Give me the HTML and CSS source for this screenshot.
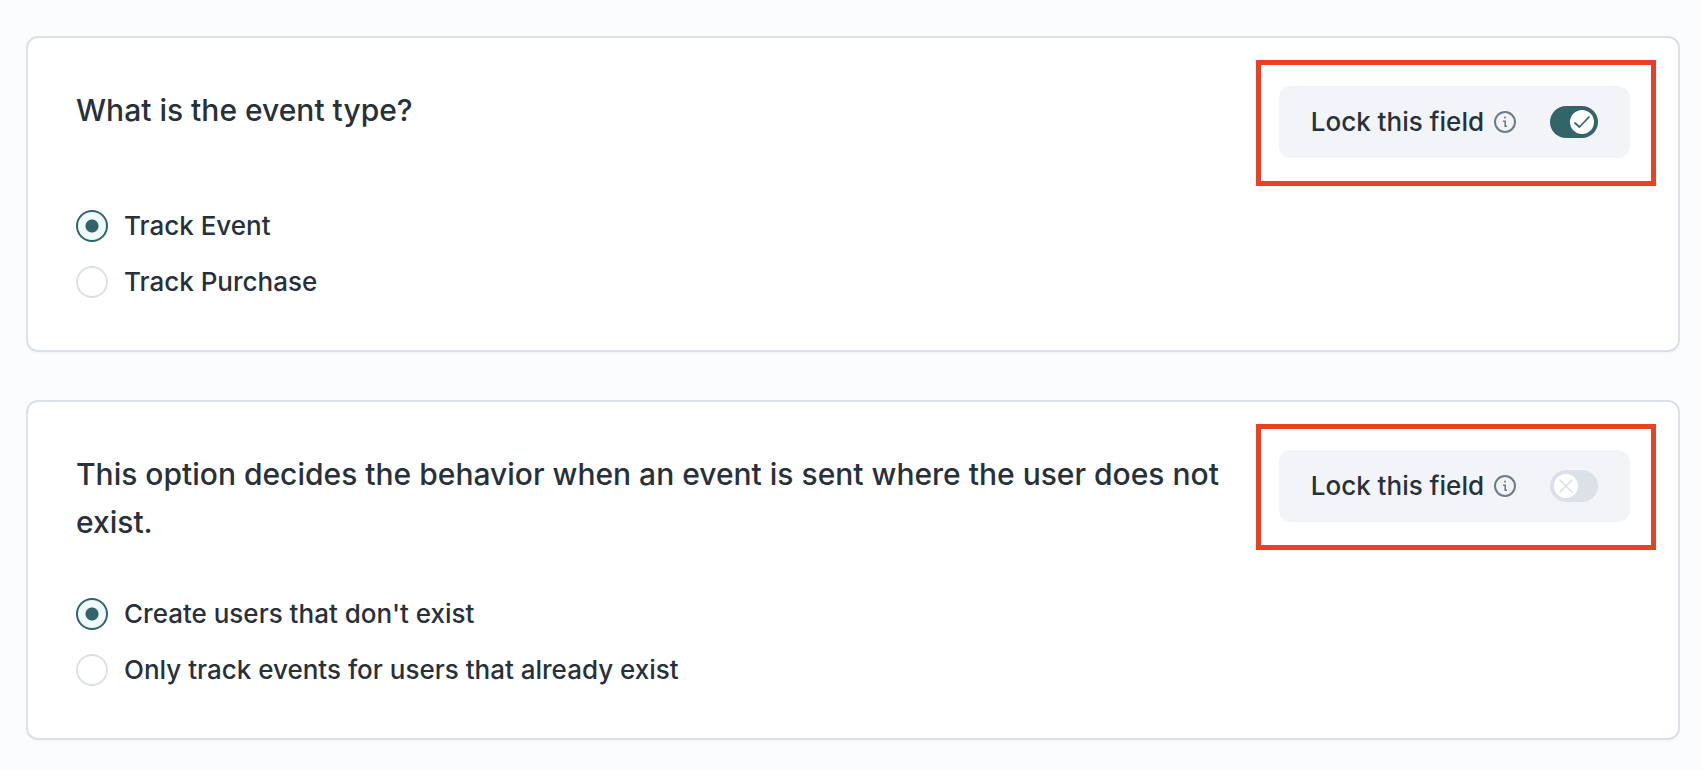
FILE: index.html
```html
<!DOCTYPE html>
<html lang="en">
<head>
    <meta charset="UTF-8">
    <meta name="viewport" content="width=device-width, initial-scale=1.0">
    <title>Event Settings</title>
    <link rel="stylesheet" href="styles.css">
</head>
<body>
    <form class="settings">
        <section class="card">
            <div class="card-header">
                <h2 id="event-type-title">What is the event type?</h2>
                <div class="lock">
                    <label for="lock-event-type">Lock this field</label>
                    <svg class="info" viewBox="0 0 22 22" aria-hidden="true">
                        <circle cx="11" cy="11" r="10"/>
                        <path class="info-stem" d="M9 10.2h2.2v5h1.8"/>
                        <circle class="info-dot" cx="11" cy="6.6" r="1"/>
                    </svg>
                    <span class="toggle">
                        <input type="checkbox" id="lock-event-type" checked>
                        <span class="knob">
                            <svg class="icon-on" viewBox="0 0 24 24"><path d="M5 13l4.5 4L19 7"/></svg>
                            <svg class="icon-off" viewBox="0 0 24 24"><path d="M6 6l12 12M18 6L6 18"/></svg>
                        </span>
                    </span>
                </div>
            </div>
            <div class="options" role="radiogroup" aria-labelledby="event-type-title">
                <label class="option">
                    <input type="radio" name="event-type" value="event" checked>
                    Track Event
                </label>
                <label class="option">
                    <input type="radio" name="event-type" value="purchase">
                    Track Purchase
                </label>
            </div>
        </section>

        <section class="card">
            <div class="card-header">
                <h2 id="user-behavior-title">This option decides the behavior when an event is sent where the user does not exist.</h2>
                <div class="lock">
                    <label for="lock-user-behavior">Lock this field</label>
                    <svg class="info" viewBox="0 0 22 22" aria-hidden="true">
                        <circle cx="11" cy="11" r="10"/>
                        <path class="info-stem" d="M9 10.2h2.2v5h1.8"/>
                        <circle class="info-dot" cx="11" cy="6.6" r="1"/>
                    </svg>
                    <span class="toggle">
                        <input type="checkbox" id="lock-user-behavior">
                        <span class="knob">
                            <svg class="icon-on" viewBox="0 0 24 24"><path d="M5 13l4.5 4L19 7"/></svg>
                            <svg class="icon-off" viewBox="0 0 24 24"><path d="M6 6l12 12M18 6L6 18"/></svg>
                        </span>
                    </span>
                </div>
            </div>
            <div class="options" role="radiogroup" aria-labelledby="user-behavior-title">
                <label class="option">
                    <input type="radio" name="user-behavior" value="create" checked>
                    Create users that don't exist
                </label>
                <label class="option">
                    <input type="radio" name="user-behavior" value="existing">
                    Only track events for users that already exist
                </label>
            </div>
        </section>
    </form>
</body>
</html>
```
FILE: styles.css
```css
* {
    box-sizing: border-box;
}
body {
    margin: 0;
    font-family: Inter, sans-serif;
    font-size: 26px;
    font-weight: 500;
    line-height: 40px;
    color: #28303a;
    background-color: #fbfcfe;
}
.settings {
    display: flex;
    flex-direction: column;
    gap: 48px;
    padding: 36px 22px 28px 26px;
}
.card {
    padding: 48px;
    background-color: #fff;
    border: 2px solid #dce1e8;
    border-radius: 12px;
    box-shadow: 0 1px 2px rgba(37, 44, 53, 0.04);
}
.card-header {
    display: flex;
    justify-content: space-between;
    align-items: flex-start;
    gap: 48px;
    margin-bottom: 48px;
}
h2 {
    margin: 0;
    font-size: 30px;
    font-weight: 500;
    line-height: 48px;
}
.lock {
    position: relative;
    display: flex;
    flex-shrink: 0;
    align-items: center;
    padding: 16px 32px;
    background-color: #f2f4f8;
    border-radius: 12px;
}
/* highlight frame */
.lock::after {
    content: "";
    position: absolute;
    inset: -26px -26px -28px -23px;
    border: 5px solid #ea4025;
    pointer-events: none;
}
.info {
    width: 22px;
    height: 22px;
    margin: 0 34px 0 10px;
    fill: none;
    stroke: #6f7b8a;
    stroke-width: 2;
}
.info-stem {
    stroke-width: 1.6;
}
.info-dot {
    fill: #6f7b8a;
    stroke: none;
}
.toggle {
    position: relative;
    display: flex;
}
.toggle input {
    appearance: none;
    width: 48px;
    height: 32px;
    margin: 0;
    border-radius: 16px;
    background-color: #dce1e8;
    cursor: pointer;
}
.knob {
    position: absolute;
    top: 4px;
    left: 4px;
    width: 24px;
    height: 24px;
    border-radius: 50%;
    background-color: #fff;
    pointer-events: none;
}
.knob svg {
    display: block;
    width: 24px;
    height: 24px;
    fill: none;
    stroke: #dce1e8;
    stroke-width: 1.7;
    stroke-linecap: round;
    stroke-linejoin: round;
}
.knob .icon-on {
    display: none;
    stroke: #33646a;
}
.toggle input:checked {
    background-color: #33646a;
}
.toggle input:checked + .knob {
    left: 20px;
}
.toggle input:checked + .knob .icon-on {
    display: block;
}
.toggle input:checked + .knob .icon-off {
    display: none;
}
.options {
    display: flex;
    flex-direction: column;
    align-items: flex-start;
    gap: 16px;
}
.option {
    display: flex;
    align-items: center;
    gap: 16px;
    cursor: pointer;
}
.option input {
    appearance: none;
    flex-shrink: 0;
    width: 32px;
    height: 32px;
    margin: 0;
    border: 2px solid #dce1e8;
    border-radius: 50%;
    background-color: #fff;
}
.option input:checked {
    border-color: #33646a;
    background: #f0fafb radial-gradient(circle, #33646a 6px, transparent 7px);
}
```
